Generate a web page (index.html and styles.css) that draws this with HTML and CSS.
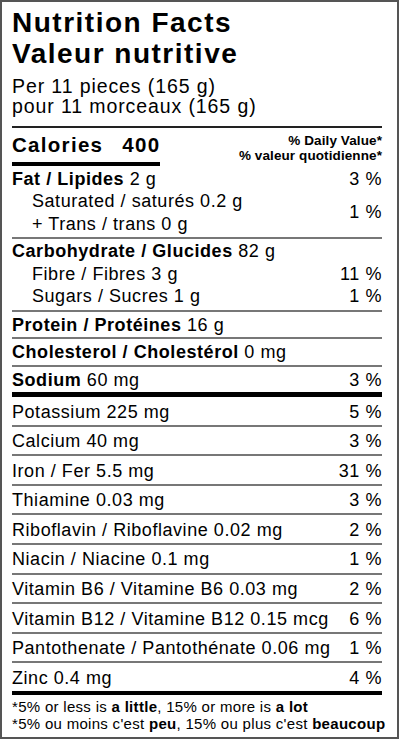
FILE: index.html
```html
<!DOCTYPE html>
<html lang="en">
<head>
<meta charset="UTF-8">
<meta name="viewport" content="width=device-width, initial-scale=1.0">
<title>Nutrition Facts</title>
<link rel="stylesheet" href="styles.css">
</head>
<body>
<div class="label">
  <h1 class="title">Nutrition Facts<br>Valeur nutritive</h1>
  <p class="serving">Per 11 pieces (165 g)<br>pour 11 morceaux (165 g)</p>

  <div class="cal-row">
    <div class="calories"><span>Calories</span><span class="cal-num">400</span></div>
    <div class="dv">% Daily Value*<br>% valeur quotidienne*</div>
  </div>

  <div class="group fat">
    <div class="row"><span><b>Fat / Lipides</b> 2 g</span><span>3 %</span></div>
    <div class="row sub"><span>Saturated / saturés 0.2 g<br>+ Trans / trans 0 g</span><span>1 %</span></div>
  </div>

  <div class="group carb">
    <div class="row"><span><b>Carbohydrate / Glucides</b> 82 g</span></div>
    <div class="row sub"><span>Fibre / Fibres 3 g</span><span>11 %</span></div>
    <div class="row sub"><span>Sugars / Sucres 1 g</span><span>1 %</span></div>
  </div>

  <div class="group single">
    <div class="row"><span><b>Protein / Protéines</b> 16 g</span></div>
  </div>
  <div class="group single">
    <div class="row"><span><b>Cholesterol / Cholestérol</b> 0 mg</span></div>
  </div>
  <div class="group single sodium">
    <div class="row"><span><b>Sodium</b> 60 mg</span><span>3 %</span></div>
  </div>

  <ul class="minerals">
    <li class="row"><span>Potassium 225 mg</span><span>5 %</span></li>
    <li class="row"><span>Calcium 40 mg</span><span>3 %</span></li>
    <li class="row"><span>Iron / Fer 5.5 mg</span><span>31 %</span></li>
    <li class="row"><span>Thiamine 0.03 mg</span><span>3 %</span></li>
    <li class="row"><span>Riboflavin / Riboflavine 0.02 mg</span><span>2 %</span></li>
    <li class="row"><span>Niacin / Niacine 0.1 mg</span><span>1 %</span></li>
    <li class="row"><span>Vitamin B6 / Vitamine B6 0.03 mg</span><span>2 %</span></li>
    <li class="row"><span>Vitamin B12 / Vitamine B12 0.15 mcg</span><span>6 %</span></li>
    <li class="row"><span>Pantothenate / Pantothénate 0.06 mg</span><span>1 %</span></li>
    <li class="row"><span>Zinc 0.4 mg</span><span>4 %</span></li>
  </ul>

  <p class="foot">
    *5% or less is <b>a little</b>, 15% or more is <b>a lot</b><br>
    *5% ou moins c'est <b>peu</b>, 15% ou plus c'est <b>beaucoup</b>
  </p>
</div>
</body>
</html>
```

FILE: styles.css
```css
* {
  box-sizing: border-box;
}

body {
  font-family: "Liberation Sans", Arial, sans-serif;
  color: #000;
  background-color: #fff;
  margin: 0;
  padding: 0;
}

.label {
  width: 399px;
  height: 739px;
  border: 2px solid #555;
  padding: 6px 15px 0 10px;
  overflow: hidden;
}

.title {
  margin: 0;
  font-size: 28px;
  line-height: 30.5px;
  font-weight: bold;
  letter-spacing: 1.5px;
  white-space: nowrap;
}

.serving {
  margin: 7px 0 0;
  padding-bottom: 10px;
  font-size: 19.5px;
  line-height: 20px;
  letter-spacing: 0.9px;
  border-bottom: 2px solid #222;
  white-space: nowrap;
}

.cal-row {
  display: flex;
  justify-content: space-between;
  align-items: flex-start;
}

.calories {
  padding: 5px 0;
  font-size: 20.5px;
  line-height: 24px;
  font-weight: bold;
  letter-spacing: 1.3px;
  border-bottom: 4px solid #000;
  white-space: nowrap;
}

.cal-num {
  margin-left: 19px;
}

.dv {
  margin-top: 4.8px;
  font-size: 13.5px;
  line-height: 15px;
  font-weight: bold;
  letter-spacing: 0.1px;
  text-align: right;
  white-space: nowrap;
}

.group {
  font-size: 18px;
  line-height: 22.5px;
  letter-spacing: 0.55px;
  border-top: 2px solid #777;
}

.group.fat {
  border-top: none;
  padding: 1.5px 0 2px;
}

.group.carb {
  padding: 1px 0 2px;
}

.group.single {
  padding: 2px 0 1px;
}

.group.sodium {
  border-bottom: 5px solid #000;
}

.row {
  display: flex;
  justify-content: space-between;
  align-items: center;
  white-space: nowrap;
}

.row.sub {
  padding-left: 20px;
}

.minerals {
  margin: 0;
  padding: 0;
  list-style: none;
  font-size: 18px;
  line-height: 22.5px;
  letter-spacing: 0.55px;
}

.minerals li {
  padding: 3.5px 0 1.6px;
  border-top: 2px solid #777;
}

.minerals li:first-child {
  border-top: none;
}

.foot {
  margin: 0;
  padding-top: 3px;
  font-size: 15px;
  line-height: 17px;
  letter-spacing: 0.3px;
  border-top: 4px solid #000;
  white-space: nowrap;
}
```
